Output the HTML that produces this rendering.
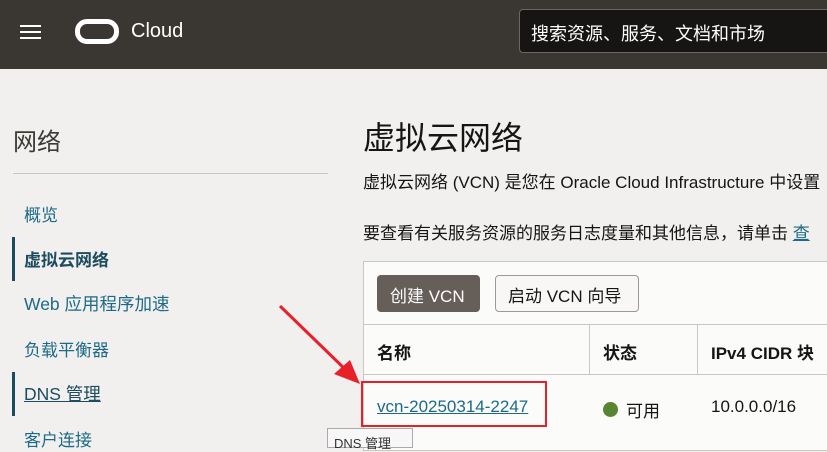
<!DOCTYPE html><html><head><meta charset="utf-8"><style>
*{margin:0;padding:0;box-sizing:border-box}
body{width:827px;height:445px;overflow:hidden;background:#f1f0ee;font-family:"Liberation Sans","Noto Sans CJK SC",sans-serif;position:relative;color:#161513}
.a{position:absolute;white-space:nowrap}
.hdr{position:absolute;left:0;top:0;width:827px;height:69px;background:#3a3632}
.nav{color:#1d6a87;font-size:17px}
</style></head><body>
<div class="hdr">
<div class="a" style="left:20px;top:25px;width:21px;height:2px;background:#fff"></div>
<div class="a" style="left:20px;top:31px;width:21px;height:2px;background:#fff"></div>
<div class="a" style="left:20px;top:37px;width:21px;height:2px;background:#fff"></div>
<div class="a" style="left:75px;top:19px;width:44px;height:25px;border:5px solid #fff;border-radius:12px"></div>
<div class="a" style="left:131px;top:20px;color:#fff;font-size:20px">Cloud</div>
<div class="a" style="left:519px;top:9px;width:320px;height:44px;background:#161513;border:1px solid #6b6761;border-radius:4px"></div>
<div class="a" style="left:531px;top:20px;color:#fff;font-size:18px">搜索资源、服务、文档和市场</div>
</div>
<div class="a" style="left:13px;top:122px;font-size:24px;color:#3b3a37">网络</div>
<div class="a" style="left:13px;top:173px;width:315px;height:1px;background:#c9c7c3"></div>
<div class="a nav" style="left:24px;top:201px">概览</div>
<div class="a" style="left:12px;top:237px;width:3px;height:44px;background:#1d4b5f"></div>
<div class="a nav" style="left:24px;top:246px;font-weight:bold;color:#1d4b5f">虚拟云网络</div>
<div class="a nav" style="left:24px;top:291px;font-size:17.5px">Web 应用程序加速</div>
<div class="a nav" style="left:24px;top:336px">负载平衡器</div>
<div class="a" style="left:12px;top:372px;width:3px;height:44px;background:#1d4b5f"></div>
<div class="a nav" style="left:24px;top:381px;text-decoration:underline;color:#1d4b5f;font-size:17.5px">DNS 管理</div>
<div class="a nav" style="left:24px;top:426px">客户连接</div>
<div class="a" style="left:363px;top:113px;font-size:32px;color:#161513">虚拟云网络</div>
<div class="a" style="left:363px;top:168px;font-size:17px">虚拟云网络 (VCN) 是您在 Oracle Cloud Infrastructure 中设置</div>
<div class="a" style="left:363px;top:219px;font-size:17px">要查看有关服务资源的服务日志度量和其他信息，请单击 <span style="color:#1d6a87;text-decoration:underline">查</span></div>
<div class="a" style="left:363px;top:261px;width:470px;height:190px;background:#fbfbfa;border:1px solid #c9c7c3"></div>
<div class="a" style="left:377px;top:275px;width:103px;height:37px;background:#655e59;border-radius:4px;color:#fff;font-size:17px;padding:7px 0 0 13px">创建 VCN</div>
<div class="a" style="left:495px;top:275px;width:144px;height:37px;background:#f8f7f6;border:1px solid #9e9892;border-radius:4px;font-size:17px;padding:6px 0 0 12px">启动 VCN 向导</div>
<div class="a" style="left:363px;top:324px;width:470px;height:1px;background:#c9c7c3"></div>
<div class="a" style="left:589px;top:324px;width:1px;height:51px;background:#c9c7c3"></div>
<div class="a" style="left:697px;top:324px;width:1px;height:51px;background:#c9c7c3"></div>
<div class="a" style="left:363px;top:374px;width:470px;height:1px;background:#c9c7c3"></div>
<div class="a" style="left:377px;top:339px;font-size:17px;font-weight:bold">名称</div>
<div class="a" style="left:603px;top:339px;font-size:17px;font-weight:bold">状态</div>
<div class="a" style="left:711px;top:339px;font-size:17px;font-weight:bold">IPv4 CIDR 块</div>
<div class="a" style="left:377px;top:397px;font-size:17px;color:#1d6a87;text-decoration:underline">vcn-20250314-2247</div>
<div class="a" style="left:603px;top:402px;width:15px;height:15px;border-radius:50%;background:#5a8530"></div>
<div class="a" style="left:626px;top:397px;font-size:17px">可用</div>
<div class="a" style="left:711px;top:397px;font-size:17px">10.0.0.0/16</div>
<div class="a" style="left:361px;top:381px;width:186px;height:46px;border:2px solid #e8202a"></div>
<div class="a" style="left:327px;top:428px;width:86px;height:20px;background:#f7f7f7;border:1px solid #aaa;font-size:13px;padding:4px 0 0 6px;color:#333">DNS 管理</div>
<svg class="a" style="left:270px;top:300px" width="100" height="90"><line x1="10" y1="6" x2="78" y2="72" stroke="#e8202a" stroke-width="3"/><polygon points="90,84 64,74 80,60" fill="#e8202a"/></svg>
</body></html>
